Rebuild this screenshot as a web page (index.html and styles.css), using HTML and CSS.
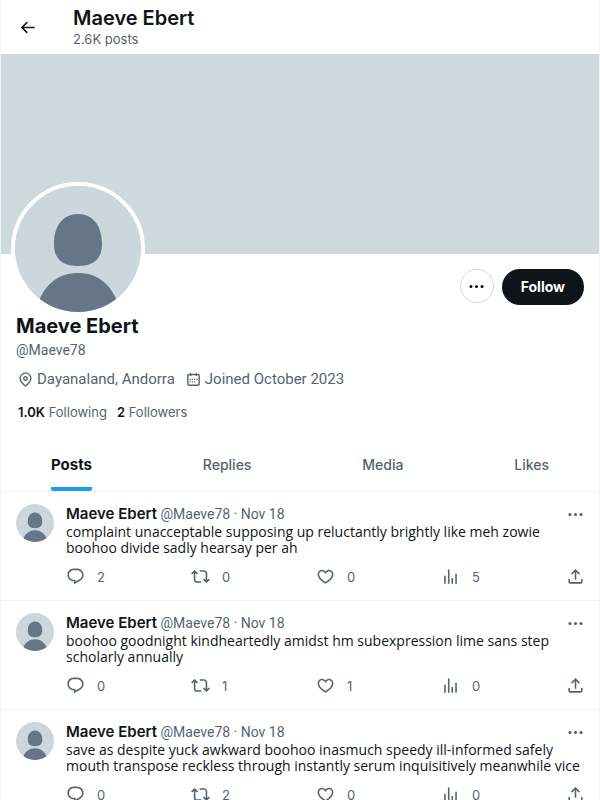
FILE: index.html
```html
<!DOCTYPE html>
<html lang="en">
<head>
<meta charset="utf-8">
<title>Maeve Ebert</title>
<meta name="viewport" content="width=device-width, initial-scale=1">
<link rel="stylesheet" href="styles.css">
</head>
<body>
<svg class="sprite" aria-hidden="true">
  <symbol id="back" viewBox="0 0 24 24"><path d="M7.414 13l5.043 5.04-1.414 1.42L3.586 12l7.457-7.46 1.414 1.42L7.414 11H21v2H7.414z"/></symbol>
  <symbol id="more" viewBox="0 0 24 24"><path d="M3 12c0-1.1.9-2 2-2s2 .9 2 2-.9 2-2 2-2-.9-2-2zm9 2c1.1 0 2-.9 2-2s-.9-2-2-2-2 .9-2 2 .9 2 2 2zm7 0c1.1 0 2-.9 2-2s-.9-2-2-2-2 .9-2 2 .9 2 2 2z"/></symbol>
  <symbol id="place" viewBox="0 0 24 24"><path d="M12 7c-1.93 0-3.5 1.57-3.5 3.5S10.07 14 12 14s3.5-1.57 3.5-3.5S13.93 7 12 7zm0 5c-.827 0-1.5-.673-1.5-1.5S11.173 9 12 9s1.5.673 1.5 1.5S12.827 12 12 12zm0-10c-4.687 0-8.5 3.813-8.5 8.5 0 5.967 7.621 11.116 7.945 11.332l.555.37.555-.37c.324-.216 7.945-5.365 7.945-11.332C20.5 5.813 16.687 2 12 2zm0 17.77c-1.665-1.241-6.5-5.196-6.5-9.27C5.5 6.916 8.416 4 12 4s6.5 2.916 6.5 6.5c0 4.073-4.835 8.028-6.5 9.27z"/></symbol>
  <symbol id="calendar" viewBox="0 0 24 24"><path d="M7 4V3h2v1h6V3h2v1h1.5C19.89 4 21 5.12 21 6.5v12c0 1.38-1.11 2.5-2.5 2.5h-13C4.12 21 3 19.88 3 18.5v-12C3 5.12 4.12 4 5.5 4H7zm0 2H5.5c-.27 0-.5.22-.5.5v12c0 .28.23.5.5.5h13c.28 0 .5-.22.5-.5v-12c0-.28-.22-.5-.5-.5H17v1h-2V6H9v1H7V6z"/><path d="M6.5 11h1.700v1.700H6.500zM9.700 11h1.700v1.700H9.700zM12.900 11h1.700v1.700h-1.700zM16.100 11h1.700v1.700h-1.700zM6.500 14.500h1.700v1.700H6.500zM9.700 14.500h1.700v1.700H9.700zM12.900 14.500h1.700v1.700h-1.700z"/></symbol>
  <symbol id="reply" viewBox="0 0 24 24"><path d="M1.751 10c0-4.42 3.584-8 8.005-8h4.366c4.49 0 8.129 3.64 8.129 8.13 0 2.96-1.607 5.68-4.196 7.11l-8.054 4.46v-3.69h-.067c-4.49.1-8.183-3.51-8.183-8.01zm8.005-6c-3.317 0-6.005 2.69-6.005 6 0 3.37 2.77 6.08 6.138 6.01l.351-.01h1.761v2.3l5.087-2.81c1.951-1.08 3.163-3.13 3.163-5.36 0-3.39-2.744-6.13-6.129-6.13H9.756z"/></symbol>
  <symbol id="repost" viewBox="0 0 24 24"><path d="M4.5 3.88l4.432 4.14-1.364 1.46L5.5 7.55V16c0 1.1.896 2 2 2H13v2H7.5c-2.209 0-4-1.79-4-4V7.55L1.432 9.48.068 8.02 4.5 3.88zM16.5 6H11V4h5.5c2.209 0 4 1.79 4 4v8.45l2.068-1.93 1.364 1.46-4.432 4.14-4.432-4.14 1.364-1.46 2.068 1.93V8c0-1.1-.896-2-2-2z"/></symbol>
  <symbol id="like" viewBox="0 0 24 24"><path d="M16.697 5.5c-1.222-.06-2.679.51-3.89 2.16l-.805 1.09-.806-1.09C9.984 6.01 8.526 5.44 7.304 5.5c-1.243.07-2.349.78-2.91 1.91-.552 1.12-.633 2.78.479 4.82 1.074 1.97 3.257 4.27 7.129 6.61 3.87-2.34 6.052-4.64 7.126-6.61 1.111-2.04 1.03-3.7.477-4.82-.561-1.13-1.666-1.84-2.908-1.91zm4.187 7.69c-1.351 2.48-4.001 5.12-8.379 7.67l-.503.3-.504-.3c-4.379-2.55-7.029-5.19-8.382-7.67-1.36-2.5-1.41-4.86-.514-6.67.887-1.79 2.647-2.91 4.601-3.01 1.651-.09 3.368.56 4.798 2.01 1.429-1.45 3.146-2.1 4.796-2.01 1.954.1 3.714 1.22 4.601 3.01.896 1.81.846 4.17-.514 6.67z"/></symbol>
  <symbol id="views" viewBox="0 0 24 24"><path d="M8.75 21V3h2v18h-2zM18 21V8.5h2V21h-2zM4 21l.004-10h2L6 21H4zm9.248 0v-7h2v7h-2z"/></symbol>
  <symbol id="share" viewBox="0 0 24 24"><path d="M12 2.59l5.7 5.7-1.41 1.42L13 6.41V16h-2V6.41l-3.3 3.3-1.41-1.42L12 2.59zM21 15l-.02 3.51c0 1.38-1.12 2.49-2.5 2.49H5.5C4.11 21 3 19.88 3 18.5V15h2v3.5c0 .28.22.5.5.5h12.98c.28 0 .5-.22.5-.5L19 15h2z"/></symbol>
  <symbol id="person" viewBox="0 0 126 126"><path fill="#ccd6dd" d="M0 0h126v126H0z"/><path fill="#667686" d="M63 28c15 0 24 12 24 30 0 15-8 22-24 22s-24-7-24-22c0-18 9-30 24-30zM63 87c18 0 32 10 39 28v11H24v-11c7-18 21-28 39-28z"/></symbol>
</svg>
<div class="page">
  <header class="topbar">
    <button class="back" type="button" aria-label="Back"><svg class="icon"><use href="#back"/></svg></button>
    <div>
      <h2 class="topbar-name">Maeve Ebert</h2>
      <p class="topbar-count">2.6K posts</p>
    </div>
  </header>
  <main>
    <div class="banner"></div>
    <section class="profile">
      <div class="profile-top">
        <svg class="portrait"><use href="#person"/></svg>
        <div class="profile-buttons">
          <button class="more" type="button" aria-label="More"><svg class="icon"><use href="#more"/></svg></button>
          <button class="follow" type="button">Follow</button>
        </div>
      </div>
      <h1 class="name">Maeve Ebert</h1>
      <p class="handle">@Maeve78</p>
      <div class="facts">
        <span class="fact"><svg class="icon"><use href="#place"/></svg>Dayanaland, Andorra</span>
        <span class="fact"><svg class="icon"><use href="#calendar"/></svg>Joined October 2023</span>
      </div>
      <div class="follows">
        <a href="#following"><b>1.0K</b> Following</a>
        <a href="#followers"><b>2</b> Followers</a>
      </div>
    </section>
    <nav class="tabs">
      <a class="tab current" href="#posts">Posts</a>
      <a class="tab" href="#replies">Replies</a>
      <a class="tab" href="#media">Media</a>
      <a class="tab" href="#likes">Likes</a>
    </nav>
    <article class="post">
      <svg class="avatar"><use href="#person"/></svg>
      <div class="body">
        <div class="byline"><span><b>Maeve Ebert</b> @Maeve78 · Nov 18</span><button type="button" aria-label="More"><svg class="icon"><use href="#more"/></svg></button></div>
        <p class="text">complaint unacceptable supposing up reluctantly brightly like meh zowie boohoo divide sadly hearsay per ah</p>
        <div class="actions">
          <button type="button" aria-label="Reply"><svg class="icon"><use href="#reply"/></svg><span>2</span></button>
          <button type="button" aria-label="Repost"><svg class="icon"><use href="#repost"/></svg><span>0</span></button>
          <button type="button" aria-label="Like"><svg class="icon"><use href="#like"/></svg><span>0</span></button>
          <button type="button" aria-label="Views"><svg class="icon"><use href="#views"/></svg><span>5</span></button>
          <button type="button" aria-label="Share"><svg class="icon"><use href="#share"/></svg></button>
        </div>
      </div>
    </article>
    <article class="post">
      <svg class="avatar"><use href="#person"/></svg>
      <div class="body">
        <div class="byline"><span><b>Maeve Ebert</b> @Maeve78 · Nov 18</span><button type="button" aria-label="More"><svg class="icon"><use href="#more"/></svg></button></div>
        <p class="text">boohoo goodnight kindheartedly amidst hm subexpression lime sans step scholarly annually</p>
        <div class="actions">
          <button type="button" aria-label="Reply"><svg class="icon"><use href="#reply"/></svg><span>0</span></button>
          <button type="button" aria-label="Repost"><svg class="icon"><use href="#repost"/></svg><span>1</span></button>
          <button type="button" aria-label="Like"><svg class="icon"><use href="#like"/></svg><span>1</span></button>
          <button type="button" aria-label="Views"><svg class="icon"><use href="#views"/></svg><span>0</span></button>
          <button type="button" aria-label="Share"><svg class="icon"><use href="#share"/></svg></button>
        </div>
      </div>
    </article>
    <article class="post">
      <svg class="avatar"><use href="#person"/></svg>
      <div class="body">
        <div class="byline"><span><b>Maeve Ebert</b> @Maeve78 · Nov 18</span><button type="button" aria-label="More"><svg class="icon"><use href="#more"/></svg></button></div>
        <p class="text">save as despite yuck awkward boohoo inasmuch speedy ill-informed safely mouth transpose reckless through instantly serum inquisitively meanwhile vice</p>
        <div class="actions">
          <button type="button" aria-label="Reply"><svg class="icon"><use href="#reply"/></svg><span>0</span></button>
          <button type="button" aria-label="Repost"><svg class="icon"><use href="#repost"/></svg><span>2</span></button>
          <button type="button" aria-label="Like"><svg class="icon"><use href="#like"/></svg><span>0</span></button>
          <button type="button" aria-label="Views"><svg class="icon"><use href="#views"/></svg><span>0</span></button>
          <button type="button" aria-label="Share"><svg class="icon"><use href="#share"/></svg></button>
        </div>
      </div>
    </article>
  </main>
</div>
</body>
</html>
```
FILE: styles.css
```css
* { box-sizing: border-box; }
html { scrollbar-width: none; }
body { margin: 0; background: #fff; color: #0f1419; font: 14px/16px Inter, "Liberation Sans", sans-serif; }
h1, h2, p { margin: 0; }
a { color: inherit; text-decoration: none; }
button { display: flex; align-items: center; padding: 0; border: 0; background: none; color: inherit; font: inherit; cursor: pointer; }
.sprite { position: absolute; width: 0; height: 0; }
.icon { display: block; flex: none; width: 19px; height: 19px; fill: currentColor; }
.page { border: solid #eff3f4; border-width: 0 1px; }

.topbar { display: flex; align-items: center; gap: 36px; height: 54px; padding: 0 17px; }
.topbar-name { font-size: 20px; line-height: 24px; font-weight: 600; }
.topbar-count { color: #536471; font-size: 13px; line-height: 18px; }
.banner { height: 200px; background: #ced9dd; }

.profile { padding: 0 15px; color: #536471; }
.profile-top { display: flex; justify-content: space-between; height: 60px; }
.portrait { width: 134px; height: 134px; margin: -72px 0 0 -5px; border: 4px solid #fff; border-radius: 50%; }
.profile-buttons { display: flex; align-items: flex-start; gap: 8px; padding-top: 15px; }
.more { justify-content: center; width: 34px; height: 34px; border: 1px solid #cfd9de; border-radius: 50%; color: #0f1419; }
.follow { height: 36px; padding: 0 19px; border-radius: 18px; background: #0f1419; color: #fff; font-weight: 700; }
.name { color: #0f1419; font-size: 20px; line-height: 24px; font-weight: 700; }
.handle { margin-top: 4px; font-family: Roboto, "Liberation Sans", sans-serif; }
.facts { display: flex; gap: 10px; margin-top: 12px; padding-left: 1px; font: 15px/18px Roboto, "Liberation Sans", sans-serif; }
.fact { display: flex; align-items: center; gap: 3px; }
.fact .icon { width: 17px; height: 17px; }
.follows { display: flex; gap: 10px; margin-top: 16px; padding-left: 2px; font-size: 13px; }
.follows b { color: #0f1419; font-weight: 600; }

.tabs { display: flex; justify-content: space-between; margin-top: 21px; padding: 0 50px; border-bottom: 1px solid #eff3f4; color: #536471; }
.tab { height: 50px; font-weight: 500; line-height: 48px; }
.current { border-bottom: 4px solid #1d9bf0; border-radius: 2px; color: #0f1419; font-size: 15px; font-weight: 700; }

.post { display: flex; gap: 12px; padding: 12px 14px 14px 15px; border-bottom: 1px solid #eff3f4; }
.avatar { flex: none; width: 38px; height: 38px; border-radius: 50%; }
.body { flex: 1; min-width: 0; }
.byline { display: flex; justify-content: space-between; color: #536471; font: 14px/20px Roboto, "Liberation Sans", sans-serif; }
.byline b { color: #0f1419; font: 600 15px/20px Inter, "Liberation Sans", sans-serif; }
.text { font-family: "Open Sans", "Liberation Sans", sans-serif; }
.actions { display: grid; grid-template-columns: repeat(4, 1fr) auto; margin-top: 11px; color: #536471; font-size: 13px; }
.actions button { gap: 12px; }
```
